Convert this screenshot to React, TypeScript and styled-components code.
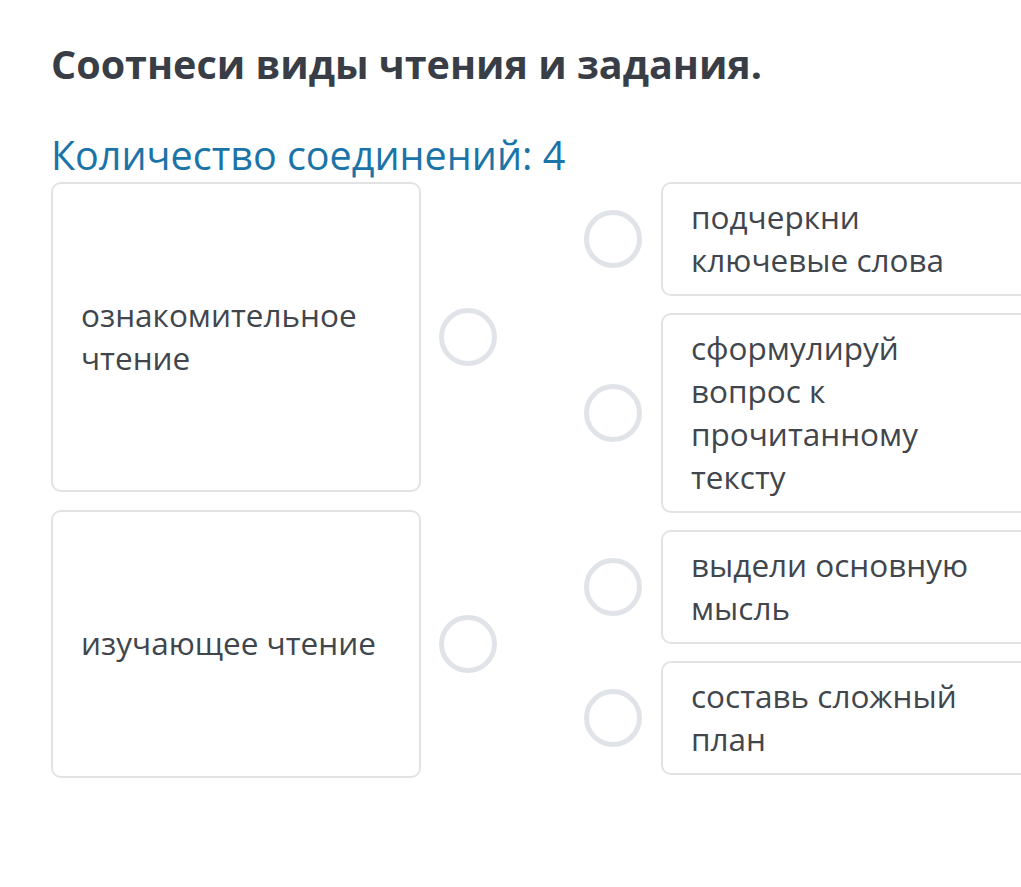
import React from "react";
import styled, { createGlobalStyle } from "styled-components";

const Global = createGlobalStyle`
  html, body { margin: 0; padding: 0; background: #ffffff; overflow: hidden; }
  body { font-family: "Open Sans", "Noto Sans", sans-serif; }
`;

const Page = styled.div`
  width: 1021px;
  height: 887px;
  box-sizing: border-box;
  padding: 36px 0 0 51px;
  overflow: hidden;
`;

const Title = styled.h1`
  margin: 0;
  font-size: 39.5px;
  line-height: 56px;
  font-weight: 700;
  color: #393e46;
  white-space: nowrap;
`;

const Counter = styled.div`
  margin-top: 36px;
  font-size: 39.5px;
  line-height: 54px;
  font-weight: 400;
  color: #1b74a7;
  white-space: nowrap;
`;

const Board = styled.div`
  display: flex;
  align-items: flex-start;
  gap: 87px;
`;

const Column = styled.div`
  display: flex;
  flex-direction: column;
  gap: 17.5px;
`;

const Row = styled.div<{ $gap: number }>`
  display: flex;
  align-items: center;
  gap: ${(p) => p.$gap}px;
`;

const Card = styled.div<{ $height?: number; $centered?: boolean }>`
  width: 370px;
  flex: 0 0 370px;
  box-sizing: border-box;
  ${(p) => (p.$height ? `height: ${p.$height}px;` : "")}
  display: flex;
  align-items: ${(p) => (p.$centered ? "center" : "flex-start")};
  padding: 11px 30px 12.5px 28px;
  border: 2px solid #e3e3e3;
  border-radius: 10px;
  background: #fff;
  font-size: 31.5px;
  line-height: 43px;
  color: #41464d;
`;

const Dot = styled.div`
  width: 58px;
  height: 58px;
  flex: 0 0 58px;
  box-sizing: border-box;
  border: 5px solid #e0e4e9;
  border-radius: 50%;
  background: #fff;
`;

const left = [
  { text: "ознакомительное чтение", height: 310 },
  { text: "изучающее чтение", height: 268 },
];

const right = [
  "подчеркни ключевые слова",
  "сформулируй вопрос к прочитанному тексту",
  "выдели основную мысль",
  "составь сложный план",
];

export default function App() {
  return (
    <>
      <Global />
      <Page>
        <Title>Соотнеси виды чтения и задания.</Title>
        <Counter>Количество соединений: 4</Counter>
        <Board>
          <Column>
            {left.map((item) => (
              <Row key={item.text} $gap={18}>
                <Card $height={item.height} $centered>
                  {item.text}
                </Card>
                <Dot />
              </Row>
            ))}
          </Column>
          <Column>
            {right.map((text) => (
              <Row key={text} $gap={19}>
                <Dot />
                <Card>{text}</Card>
              </Row>
            ))}
          </Column>
        </Board>
      </Page>
    </>
  );
}
